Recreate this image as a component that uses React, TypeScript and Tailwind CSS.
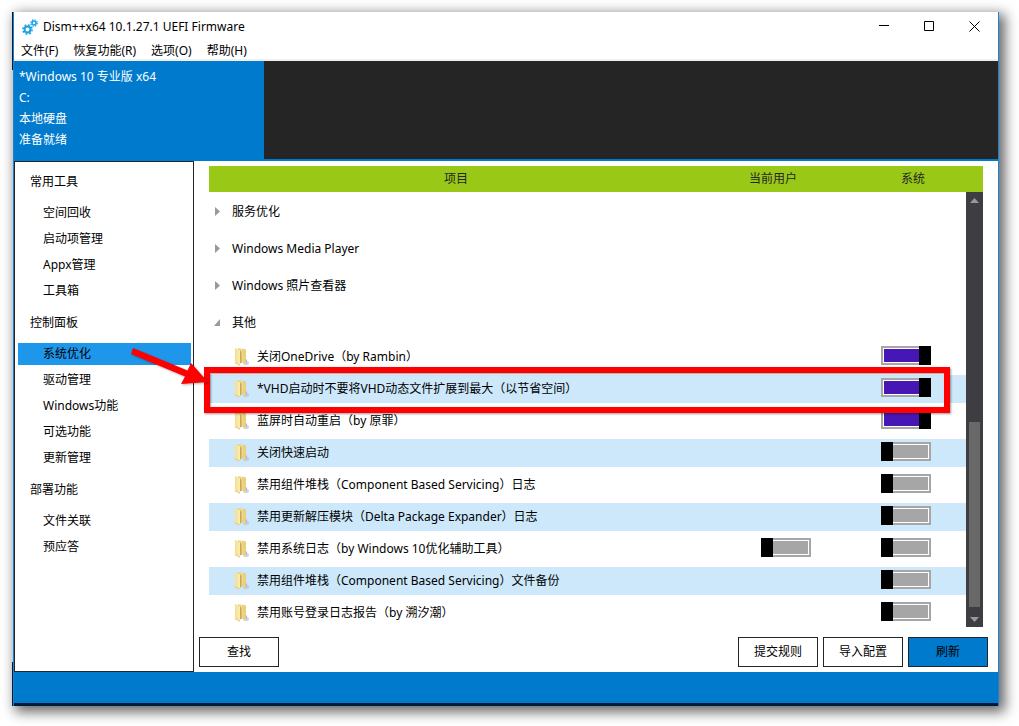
import React, { useState } from 'react';

const menus = ['文件(F)', '恢复功能(R)', '选项(O)', '帮助(H)'];

const sections = [
  { title: '常用工具', items: ['空间回收', '启动项管理', 'Appx管理', '工具箱'] },
  { title: '控制面板', items: ['系统优化', '驱动管理', 'Windows功能', '可选功能', '更新管理'] },
  { title: '部署功能', items: ['文件关联', '预应答'] },
];

const groups = [
  { name: '服务优化', open: false },
  { name: 'Windows Media Player', open: false },
  { name: 'Windows 照片查看器', open: false },
  { name: '其他', open: true },
];

type Item = { name: string; system: boolean; user?: boolean };

const items: Item[] = [
  { name: '关闭OneDrive（by Rambin）', system: true },
  { name: '*VHD启动时不要将VHD动态文件扩展到最大（以节省空间）', system: true },
  { name: '蓝屏时自动重启（by 原罪）', system: true },
  { name: '关闭快速启动', system: false },
  { name: '禁用组件堆栈（Component Based Servicing）日志', system: false },
  { name: '禁用更新解压模块（Delta Package Expander）日志', system: false },
  { name: '禁用系统日志（by Windows 10优化辅助工具）', system: false, user: false },
  { name: '禁用组件堆栈（Component Based Servicing）文件备份', system: false },
  { name: '禁用账号登录日志报告（by 溯汐潮）', system: false },
];

const GearsIcon = () => (
  <svg width="16" height="16" viewBox="0 0 16 16" fill="none" stroke="#18a4e4" aria-hidden="true">
    <circle cx="5.5" cy="10.5" r="3" strokeWidth="2" />
    <circle cx="5.5" cy="10.5" r="4.6" strokeWidth="1.6" strokeDasharray="1.8 1.813" />
    <circle cx="12" cy="4" r="2" strokeWidth="1.6" />
    <circle cx="12" cy="4" r="3.3" strokeWidth="1.2" strokeDasharray="1.3 1.292" />
  </svg>
);

const FolderIcon = () => (
  <svg width="14" height="18" viewBox="0 0 14 18" className="shrink-0" aria-hidden="true">
    <defs>
      <linearGradient id="folderLeft" x1="0" y1="0" x2="1" y2="0">
        <stop offset="0" stopColor="#f3df92" />
        <stop offset="1" stopColor="#fbedb2" />
      </linearGradient>
      <linearGradient id="folderRight" x1="0" y1="0" x2="1" y2="0">
        <stop offset="0" stopColor="#d2b466" />
        <stop offset="0.4" stopColor="#f0d98c" />
        <stop offset="1" stopColor="#e8cc74" />
      </linearGradient>
    </defs>
    <ellipse cx="11" cy="15" rx="3" ry="2" fill="#b9c3cf" opacity="0.7" />
    <path d="M10.500 11.500H12v3h-1.500Z" fill="#9db9dc" />
    <path d="M3 .5 10 1 11 2v13H6L4 13Z" fill="url(#folderRight)" />
    <path d="M5 3 6.500 3.500V14L5 16Z" fill="#c5a85c" />
    <path d="M0 0 5 2V17.500L0 15Z" fill="url(#folderLeft)" />
    <path d="M0 14.700 5 17.200" stroke="#dfc272" strokeWidth=".8" />
  </svg>
);

const Toggle = ({ label, initial }: { label: string; initial: boolean }) => {
  const [on, setOn] = useState(initial);
  return (
    <input
      type="checkbox"
      aria-label={label}
      checked={on}
      onChange={() => setOn(!on)}
      className="relative block h-[19px] w-[50px] appearance-none border-2 border-[#a6a6a6] bg-[#a6a6a6] shadow-[inset_0_0_0_1px_#fff] before:absolute before:-top-0.5 before:-left-0.5 before:h-[19px] before:w-3 before:bg-black checked:bg-[#4617b4] checked:before:-right-0.5 checked:before:left-auto"
    />
  );
};

const Sidebar = () => {
  const [active, setActive] = useState('系统优化');
  return (
    <nav className="flex w-[180px] shrink-0 flex-col gap-2.5 border border-[#252525] pt-[9px] pr-0.5 pl-[3px]">
      {sections.map((section) => (
        <div key={section.title}>
          <h2 className="mb-[9px] pl-3 leading-[22px]">{section.title}</h2>
          <ul className="flex flex-col gap-1">
            {section.items.map((item) => (
              <li key={item}>
                <button
                  onClick={() => setActive(item)}
                  className={`block w-full pl-[25px] text-left leading-[22px] ${active === item ? 'bg-[#1e97ea]' : ''}`}
                >
                  {item}
                </button>
              </li>
            ))}
          </ul>
        </div>
      ))}
    </nav>
  );
};

const ScrollBar = () => (
  <div className="absolute top-[26px] right-0 bottom-0.5 flex w-[17px] flex-col items-center bg-[#3e3e42]">
    <svg width="9" height="5" className="mt-1.5 shrink-0" aria-hidden="true">
      <path d="M0 5 4.5 0 9 5Z" fill="#999" />
    </svg>
    <div className="grow" />
    <div className="mb-2.5 h-[185px] w-[11px] shrink-0 bg-[#686868]" />
    <svg width="9" height="5" className="mb-[5px] shrink-0" aria-hidden="true">
      <path d="M0 0h9L4.500 5Z" fill="#999" />
    </svg>
  </div>
);

const Annotation = () => (
  <>
    <div className="pointer-events-none absolute top-[201px] right-[33px] -left-[5px] h-[46px] border-[6px] border-[#fe0000] shadow-[1px_1px_2px_rgba(0,0,0,0.4),inset_1px_1px_2px_rgba(0,0,0,0.4)]" />
    <svg
      width="80"
      height="42"
      viewBox="0 0 80 42"
      className="pointer-events-none absolute top-[180px] -left-[79px] drop-shadow-[1px_1px_1px_rgba(0,0,0,0.3)]"
      aria-hidden="true"
    >
      <path d="M3 2 57.500 24.500 61 17 78 36 51 38 55 30.500 1 8Z" fill="#fe0000" />
    </svg>
  </>
);

const OptimizeTable = () => (
  <div className="relative mr-[15px] ml-[15px]">
    <table className="w-full table-fixed border-separate border-spacing-0">
      <colgroup>
        <col />
        <col className="w-[140px]" />
        <col className="w-[140px]" />
      </colgroup>
      <thead>
        <tr className="h-[27px] text-[#252525]">
          <th className="border-b border-transparent bg-[#9ac816] bg-clip-padding p-0 font-normal">项目</th>
          <th className="border-b border-transparent bg-[#9ac816] bg-clip-padding p-0 font-normal">当前用户</th>
          <th className="border-b border-transparent bg-[#9ac816] bg-clip-padding p-0 font-normal">系统</th>
        </tr>
      </thead>
      <tbody>
        {groups.map((group) => (
          <tr key={group.name} className="h-[37px]">
            <td colSpan={3} className="p-0 pl-[5px]">
              <button aria-expanded={group.open} className="flex items-center gap-3">
                <svg width="6" height="9" aria-hidden="true">
                  {group.open ? <path d="M6 1v7H0Z" fill="#999" /> : <path d="M1 0 6 4.500 1 9Z" fill="#999" />}
                </svg>
                {group.name}
              </button>
            </td>
          </tr>
        ))}
        {items.map((item, i) => {
          const cell = `border-y-2 border-transparent bg-clip-padding p-0 ${i % 2 ? 'bg-[#cce8fa]' : ''}`;
          return (
            <tr key={item.name} className="h-8">
              <td className={cell}>
                <div className="flex items-center gap-2 pl-[26px]">
                  <FolderIcon />
                  {item.name}
                </div>
              </td>
              <td className={`${cell} align-top`}>
                {item.user !== undefined && (
                  <div className="pt-[3px] pl-[58px]">
                    <Toggle label={`${item.name} 当前用户`} initial={item.user} />
                  </div>
                )}
              </td>
              <td className={`${cell} align-top`}>
                <div className="pt-[3px] pl-[38px]">
                  <Toggle label={`${item.name} 系统`} initial={item.system} />
                </div>
              </td>
            </tr>
          );
        })}
      </tbody>
    </table>
    <ScrollBar />
    <Annotation />
  </div>
);

const App = () => {
  return (
    <div className="flex min-h-screen bg-white pt-3 pr-5 pb-5 pl-[13px] font-['Noto_Sans','Noto_Sans_CJK_SC',sans-serif] text-xs text-black">
      <div className="relative flex min-w-0 grow flex-col border-x border-[#1883d7] bg-white shadow-[4px_4px_12px_2px_rgba(0,0,0,0.6)]">
        {/* Desktop edge behind the window */}
        <div className="absolute top-0 -left-0.5 h-[58px] w-px bg-[#001a33]" />
        <div className="absolute bottom-0 -left-0.5 h-11 w-px bg-[#001a33]" />

        {/* Title bar */}
        <header className="flex h-[29px] items-center pr-[18px] pl-2">
          <GearsIcon />
          <h1 className="ml-[5px] grow">Dism++x64 10.1.27.1 UEFI Firmware</h1>
          <div className="flex gap-[34px]">
            <button aria-label="最小化">
              <svg width="11" height="11" stroke="#000" aria-hidden="true">
                <path d="M0 4.500h10" />
              </svg>
            </button>
            <button aria-label="最大化">
              <svg width="11" height="11" stroke="#000" fill="none" aria-hidden="true">
                <path d="M.5.5h9v9h-9Z" />
              </svg>
            </button>
            <button aria-label="关闭">
              <svg width="11" height="11" stroke="#000" aria-hidden="true">
                <path d="m.5.5 10 10M10.500.5l-10 10" />
              </svg>
            </button>
          </div>
        </header>

        {/* Menu bar */}
        <div className="flex gap-[15px] border-b-2 border-[#f0f0f0] pt-0.5 pl-[7px] leading-4">
          {menus.map((menu) => (
            <button key={menu}>{menu}</button>
          ))}
        </div>

        {/* Selected system */}
        <div className="flex border-b-2 border-[#007acc] bg-[#252525]">
          <div className="w-[250px] bg-[#007acc] pt-[5px] pb-[9px] pl-[5px] leading-[21px] text-white">
            <p>*Windows 10 专业版 x64</p>
            <p>C:</p>
            <p>本地硬盘</p>
            <p>准备就绪</p>
          </div>
        </div>

        <div className="flex grow">
          <Sidebar />
          <main className="flex min-w-0 grow flex-col justify-between pt-[5px] pb-[5px]">
            <OptimizeTable />
            <div className="flex gap-[5px] pr-2.5 pl-[5px]">
              <button className="h-[30px] w-20 border border-[#252525]">查找</button>
              <div className="grow" />
              <button className="h-[30px] w-20 border border-[#252525]">提交规则</button>
              <button className="h-[30px] w-20 border border-[#252525]">导入配置</button>
              <button className="h-[30px] w-20 border border-[#252525] bg-[#007acc]">刷新</button>
            </div>
          </main>
        </div>

        <footer className="h-[34px] border-b-[3px] border-[#001a33] bg-[#007acc]" />
      </div>
    </div>
  );
};

export default App;
